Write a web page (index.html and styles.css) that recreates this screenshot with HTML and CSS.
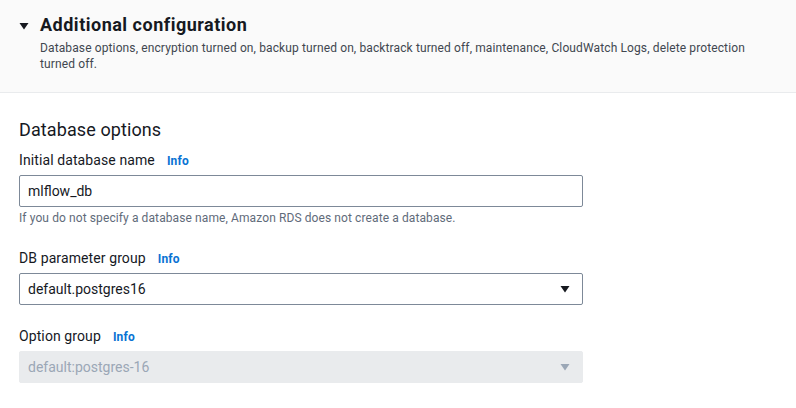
FILE: index.html
```html
<!DOCTYPE html>
<html>
<head>
<meta charset="utf-8">
<link rel="stylesheet" href="styles.css">
</head>
<body>
<div class="page">
  <header class="expander">
    <div class="exp-title">
      <svg class="caret" width="10" height="8" viewBox="0 0 10 8"><path d="M0.5 1 L9.5 1 L5 7.5 Z" fill="#16191f"/></svg>
      <h2>Additional configuration</h2>
    </div>
    <p class="exp-desc">Database options, encryption turned on, backup turned on, backtrack turned off, maintenance, CloudWatch Logs, delete protection turned off.</p>
  </header>
  <section class="content">
    <h3 class="section-title">Database options</h3>
    <div class="field">
      <div class="label">Initial database name <span class="info">Info</span></div>
      <div class="input">mlflow_db</div>
      <div class="hint">If you do not specify a database name, Amazon RDS does not create a database.</div>
    </div>
    <div class="field">
      <div class="label">DB parameter group <span class="info">Info</span></div>
      <div class="input select">default.postgres16
        <svg class="arrow" width="10" height="8" viewBox="0 0 10 8"><path d="M0.5 1 L9.5 1 L5 7.5 Z" fill="#16191f"/></svg>
      </div>
    </div>
    <div class="field">
      <div class="label">Option group <span class="info">Info</span></div>
      <div class="input select disabled">default:postgres-16
        <svg class="arrow" width="10" height="8" viewBox="0 0 10 8"><path d="M0.5 1 L9.5 1 L5 7.5 Z" fill="#9ba7b6"/></svg>
      </div>
    </div>
  </section>
</div>
</body>
</html>
```
FILE: styles.css
```css
html, body {
  margin: 0;
  padding: 0;
  background: #ffffff;
}
body {
  font-family: Roboto, "Noto Sans", "Liberation Sans", sans-serif;
  color: #16191f;
  width: 796px;
  height: 408px;
  overflow: hidden;
}
.expander {
  background: #fafafa;
  border-bottom: 1px solid #e9ebed;
  padding: 13px 20px 0 19px;
  height: 79px;
}
.exp-title {
  display: flex;
  align-items: center;
  gap: 11px;
}
.caret {
  display: block;
  margin-top: 1px;
}
.exp-title h2 {
  margin: 0;
  font-size: 18px;
  font-weight: 700;
  line-height: 24px;
  letter-spacing: 0.5px;
}
.exp-desc {
  margin: 3px 0 0 21px;
  font-size: 12px;
  line-height: 16px;
  color: #414750;
  letter-spacing: 0.12px;
}
.content {
  padding: 25px 19px 0 19px;
  display: flex;
  flex-direction: column;
}
.section-title {
  margin: 0;
  font-size: 18px;
  font-weight: 400;
  line-height: 24px;
  letter-spacing: 0.1px;
}
.field {
  display: flex;
  flex-direction: column;
  width: 564px;
}
.field + .field {
  margin-top: 22px;
}
.section-title + .field {
  margin-top: 9px;
}
.label {
  display: flex;
  align-items: baseline;
  height: 18px;
  font-size: 14px;
  line-height: 18px;
  margin-bottom: 6px;
  letter-spacing: 0.1px;
}
.info {
  color: #0972d3;
  font-size: 12px;
  line-height: 12px;
  font-weight: 700;
  margin-left: 12px;
  letter-spacing: 0.2px;
}
.input {
  position: relative;
  box-sizing: border-box;
  height: 32px;
  border: 1px solid #7d8998;
  border-radius: 2px;
  padding: 0 8px;
  font-size: 14px;
  line-height: 30px;
  color: #16191f;
}
.select .arrow {
  position: absolute;
  right: 12px;
  top: 11px;
}
.disabled {
  background: #e9ebed;
  border-color: #e9ebed;
  color: #9ba7b6;
}
.hint {
  font-size: 12px;
  line-height: 16px;
  color: #5f6b7a;
  margin: 3px 0 1px;
  letter-spacing: 0.1px;
}
```
